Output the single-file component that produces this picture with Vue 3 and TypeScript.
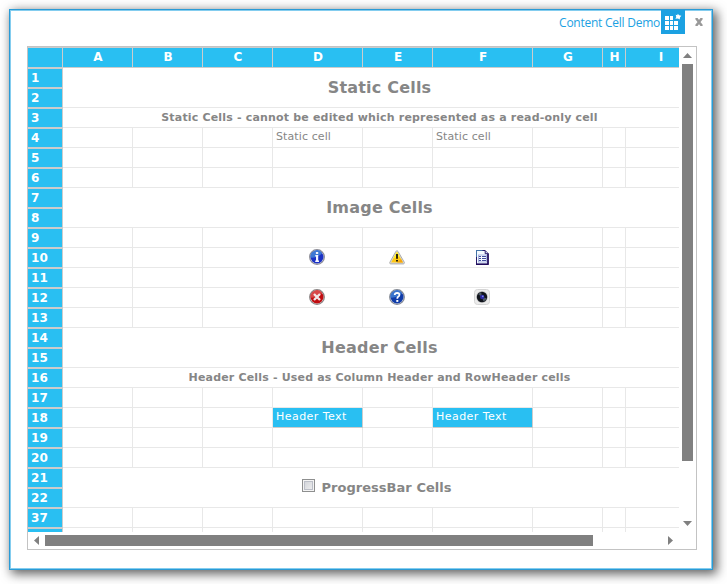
<script setup lang="ts">
interface Column { name: string; width: number }
interface Cell { kind: 'text' | 'head' | 'icon'; value: string }
interface Block {
  rows: number[]
  type: 'cells' | 'title' | 'note' | 'progress'
  text?: string
  cells?: Record<string, Cell>
}

const columns: Column[] = [
  { name: 'A', width: 70 },
  { name: 'B', width: 70 },
  { name: 'C', width: 70 },
  { name: 'D', width: 90 },
  { name: 'E', width: 70 },
  { name: 'F', width: 100 },
  { name: 'G', width: 70 },
  { name: 'H', width: 23 },
  { name: 'I', width: 70 },
]

const text = (value: string): Cell => ({ kind: 'text', value })
const head = (value: string): Cell => ({ kind: 'head', value })
const icon = (value: string): Cell => ({ kind: 'icon', value })
const blank = (row: number): Block => ({ rows: [row], type: 'cells' })

const blocks: Block[] = [
  { rows: [1, 2], type: 'title', text: 'Static Cells' },
  { rows: [3], type: 'note', text: 'Static Cells - cannot be edited which represented as a read-only cell' },
  { rows: [4], type: 'cells', cells: { D: text('Static cell'), F: text('Static cell') } },
  blank(5),
  blank(6),
  { rows: [7, 8], type: 'title', text: 'Image Cells' },
  blank(9),
  { rows: [10], type: 'cells', cells: { D: icon('info'), E: icon('warning'), F: icon('document') } },
  blank(11),
  { rows: [12], type: 'cells', cells: { D: icon('error'), E: icon('help'), F: icon('camera') } },
  blank(13),
  { rows: [14, 15], type: 'title', text: 'Header Cells' },
  { rows: [16], type: 'note', text: 'Header Cells - Used as Column Header and RowHeader cells' },
  blank(17),
  { rows: [18], type: 'cells', cells: { D: head('Header Text'), F: head('Header Text') } },
  blank(19),
  blank(20),
  { rows: [21, 22], type: 'progress', text: 'ProgressBar Cells' },
  blank(37),
]

const rowNumbers = blocks.flatMap((b) => b.rows)
</script>

<template>
  <div class="page">
    <div class="window">
      <header class="titlebar">
        <span class="caption">Content Cell Demo</span>
        <svg class="logo" width="24" height="24" viewBox="0 0 24 24" shape-rendering="crispEdges">
          <rect width="24" height="24" fill="#1ba1e2" />
          <path fill="#fff" d="M4 6h4v4H4zM9 6h3v4H9zM4 11h4v4H4zM9 11h3v4H9zM13 11h4v4h-4zM4 16h4v4H4zM9 16h3v4H9zM13 16h4v4h-4z" />
          <path fill="#fff" shape-rendering="auto" d="M16.7 3.7l1.5 1.6 2.2.5-1.3 1.5-.5 2.1-1.6-.9-2.6.3.9-1.9-.6-2.2 1.7.5z" />
        </svg>
        <svg class="close" width="8" height="8" viewBox="0 0 8 8">
          <path d="M1 0L7 8M7 0L1 8" stroke="#999" stroke-width="2.5" />
        </svg>
      </header>

      <div class="sheet">
        <div class="main">
          <div class="viewport">
            <div class="colheads">
              <div class="corner"></div>
              <div v-for="c in columns" :key="c.name" class="colhead" :style="{ width: c.width + 'px' }">{{ c.name }}</div>
            </div>
            <div class="content">
              <div class="rowheads">
                <div v-for="n in rowNumbers" :key="n" class="rowhead">{{ n }}</div>
                <div class="rowhead partial"></div>
              </div>
              <div class="body">
                <template v-for="b in blocks" :key="b.rows[0]">
                  <div v-if="b.type === 'cells'" class="row">
                    <div
                      v-for="c in columns"
                      :key="c.name"
                      class="cell"
                      :class="b.cells?.[c.name]?.kind"
                      :style="{ width: c.width + 'px' }"
                    >
                      <template v-if="b.cells?.[c.name]?.kind === 'icon'">
                        <svg v-if="b.cells[c.name].value === 'info'" width="16" height="16" viewBox="0 0 16 16">
                          <circle cx="8" cy="8" r="7.3" fill="#eef" stroke="#8c8c96" stroke-width="1.3" />
                          <circle cx="8" cy="8" r="6.5" fill="#1c32c4" />
                          <path d="M1.6 8.6A6.4 6.4 0 0 1 13.2 4Q9 9 1.6 8.6z" fill="#3e78d4" />
                          <path d="M6.9 3h2.3v2H6.9zM6.3 6h2.9v5.5h.8V13H6.2v-1.5h.8v-4h-.7z" fill="#f4f6ff" />
                        </svg>
                        <svg v-else-if="b.cells[c.name].value === 'warning'" width="16" height="16" viewBox="0 0 16 16">
                          <path d="M7.9 1.8Q8.6 1.8 9 2.4L15.3 13.3Q15.6 14.8 14.4 14.9H1.6Q.4 14.7.8 13.4L6.9 2.4Q7.2 1.8 7.9 1.8z" fill="#ddd" stroke="#a4a4a4" stroke-width=".9" />
                          <path d="M8 2.8L14 13.5H2z" fill="#ffc814" />
                          <path d="M8 2.8L10.6 7.4 4.2 9.6z" fill="#fff01c" />
                          <path d="M8 13.5L12 10l2 3.5z" fill="#f6a40c" />
                          <path d="M7 5h2v4.8H7zM7 11h2v1.5H7z" fill="#2a2208" />
                        </svg>
                        <svg v-else-if="b.cells[c.name].value === 'document'" class="doc" width="16" height="16" viewBox="0 0 16 16">
                          <path d="M2.5 1.5h8.7l2.8 3V15H2.5z" fill="#f4faff" stroke="#281868" stroke-width="1" />
                          <path d="M2 1h6.5v1H3v6H2z" fill="#4474a8" />
                          <path d="M13.2 4.5h1.6V16H2v-1.3h11.2z" fill="#200c5c" />
                          <path d="M11.2 1.8v2.9h2.9" fill="#c8d8f0" stroke="#281868" stroke-width="1" />
                          <rect x="4.5" y="6" width="8" height="7" fill="#f4f8ff" stroke="#a8b4e0" />
                          <path d="M5 7h2v1H5zM8 7h4v1H8zM5 9h2v1H5zM8 9h4v1H8zM5 11h2v1H5zM8 11h4v1H8z" fill="#404c9c" />
                        </svg>
                        <svg v-else-if="b.cells[c.name].value === 'error'" width="16" height="16" viewBox="0 0 16 16">
                          <circle cx="8" cy="8" r="7.3" fill="#eee" stroke="#8a8484" stroke-width="1.3" />
                          <circle cx="8" cy="8" r="6.5" fill="#c00c10" />
                          <path d="M1.6 8.6A6.4 6.4 0 0 1 13.2 4Q9 9 1.6 8.6z" fill="#d84848" />
                          <path d="M5 5l6 6M11 5l-6 6" stroke="#f2e8e8" stroke-width="2.3" />
                        </svg>
                        <svg v-else-if="b.cells[c.name].value === 'help'" width="16" height="16" viewBox="0 0 16 16">
                          <circle cx="8" cy="8" r="7.3" fill="#eef" stroke="#848a94" stroke-width="1.3" />
                          <circle cx="8" cy="8" r="6.5" fill="#103ca8" />
                          <path d="M1.6 8.6A6.4 6.4 0 0 1 13.2 4Q9 9 1.6 8.6z" fill="#3a74cc" />
                          <path d="M5.7 6Q5.8 3.9 8.2 3.9 10.5 4 10.4 6 10.3 7.2 8.9 8 8.3 8.5 8.3 9.7" fill="none" stroke="#fff" stroke-width="1.8" />
                          <path d="M7.3 11h2v1.9h-2z" fill="#fff" />
                        </svg>
                        <svg v-else width="16" height="16" viewBox="0 0 16 16">
                          <rect x=".5" y=".5" width="15" height="15" rx="3" fill="#ececec" stroke="#d4d4d4" />
                          <circle cx="8" cy="8" r="5.9" fill="#c4c4c4" />
                          <circle cx="8" cy="8" r="5.2" fill="#10141c" />
                          <path d="M8 8L4.2 5.2A4.8 4.8 0 0 1 7.2 3.3zM8 8l4.6 1.2A4.8 4.8 0 0 1 9.5 12.5z" fill="#4c5864" />
                          <circle cx="8.2" cy="8" r="2.2" fill="#2c28a0" />
                          <circle cx="8.8" cy="7.3" r=".9" fill="#7c8cf0" />
                        </svg>
                      </template>
                      <span v-else-if="b.cells?.[c.name]">{{ b.cells[c.name].value }}</span>
                    </div>
                  </div>
                  <div v-else class="merged" :class="[b.type, { tall: b.rows.length > 1 }]">
                    <span v-if="b.type === 'progress'" class="check"></span>
                    <span>{{ b.text }}</span>
                  </div>
                </template>
                <div class="row partial">
                  <div v-for="c in columns" :key="c.name" class="cell" :style="{ width: c.width + 'px' }"></div>
                </div>
              </div>
            </div>
          </div>
          <div class="vbar">
            <svg width="9" height="5" viewBox="0 0 9 5"><path d="M0 5L4.5 0 9 5z" fill="#808080" /></svg>
            <div class="vtrack"><div class="vthumb"></div></div>
            <svg width="9" height="5" viewBox="0 0 9 5"><path d="M0 0L4.5 5 9 0z" fill="#808080" /></svg>
          </div>
        </div>
        <div class="hbar">
          <svg width="5" height="9" viewBox="0 0 5 9"><path d="M5 0L0 4.5 5 9z" fill="#808080" /></svg>
          <div class="htrack"><div class="hthumb"></div></div>
          <svg width="5" height="9" viewBox="0 0 5 9"><path d="M0 0L5 4.5 0 9z" fill="#808080" /></svg>
        </div>
      </div>
    </div>
  </div>
</template>

<style>
body {
  background: #fff;
  overflow: hidden;
}
</style>

<style scoped>
.page {
  box-sizing: border-box;
  width: 727px;
  height: 584px;
  padding: 9px;
  overflow: hidden;
  font-family: 'DejaVu Sans', sans-serif;
}
.window {
  box-sizing: border-box;
  width: 704px;
  height: 561px;
  border: 1px solid #2a9bd6;
  background: #fff;
  box-shadow: inset 0 0 0 1px #84cdef, 3px 3px 10px 1px rgba(0, 0, 0, 0.62);
}
.titlebar {
  display: flex;
  height: 36px;
  justify-content: flex-end;
  padding-right: 9px;
}
.caption {
  margin-top: 4px;
  color: #1ba1e2;
  font: 12px/17px 'Open Sans', sans-serif;
  letter-spacing: -0.25px;
  white-space: nowrap;
}
.logo {
  margin-left: 1px;
}
.close {
  margin: 8px 0 0 10px;
}
.sheet {
  box-sizing: border-box;
  width: 670px;
  height: 504px;
  margin-left: 17px;
  border: 1px solid #c3c3c3;
}
.main {
  display: flex;
  height: 485px;
}
.viewport {
  width: 651px;
  height: 485px;
  overflow: hidden;
}
.colheads {
  display: flex;
  width: 668px;
  height: 21px;
}
.corner,
.colhead {
  box-sizing: border-box;
  flex: none;
  border: solid #ccc;
  border-width: 1px 1px 1px 0;
  background: #29bff2;
}
.corner {
  width: 35px;
}
.colhead {
  padding-left: 1px;
  color: #fff;
  font-size: 12px;
  font-weight: bold;
  line-height: 19px;
  text-align: center;
}
.content {
  display: flex;
  width: 668px;
}
.rowheads {
  width: 35px;
  flex: none;
}
.rowhead {
  box-sizing: border-box;
  height: 20px;
  padding-left: 3px;
  border: solid #ccc;
  border-width: 1px 1px 1px 0;
  background: #29bff2;
  color: #fff;
  font-size: 12px;
  font-weight: bold;
  letter-spacing: 0.2px;
  line-height: 18px;
}
.body {
  width: 633px;
  flex: none;
}
.row {
  display: flex;
  height: 20px;
}
.cell {
  box-sizing: border-box;
  flex: none;
  height: 20px;
  border: solid #e8e8e8;
  border-width: 0 1px 1px 0;
  color: #868686;
  font-size: 11px;
  line-height: 13px;
  white-space: nowrap;
}
.cell.text,
.cell.head {
  padding: 2px 0 0 3px;
}
.cell.text {
  letter-spacing: 0.1px;
}
.cell.head {
  border-color: #ccc;
  background: #29bff2;
  color: #fff;
  letter-spacing: 0.45px;
}
.cell.icon {
  display: flex;
  justify-content: center;
  padding: 1px 1px 0 0;
}
.doc {
  margin-right: 1px;
}
.partial {
  height: 4px;
  border-bottom: 0;
  overflow: hidden;
}
.merged {
  box-sizing: border-box;
  display: flex;
  height: 20px;
  align-items: center;
  justify-content: center;
  border-bottom: 1px solid #e8e8e8;
  color: #868686;
  font-weight: bold;
  white-space: nowrap;
}
.tall {
  height: 40px;
}
.title {
  padding-bottom: 1px;
  font-size: 16px;
  letter-spacing: 0.2px;
}
.note {
  font-size: 11px;
  letter-spacing: 0.18px;
}
.progress {
  gap: 6px;
  padding-right: 5px;
  font-size: 13px;
  letter-spacing: 0.04px;
}
.check {
  box-sizing: border-box;
  width: 13px;
  height: 13px;
  margin-bottom: 4px;
  border: 1px solid #8e8f8f;
  background: linear-gradient(135deg, #cdd0d6, #f2f2f2);
  box-shadow: inset 0 0 0 1px #f4f4f4, inset 0 0 0 2px #bcbfc8;
}
.vbar {
  box-sizing: border-box;
  display: flex;
  width: 17px;
  flex-direction: column;
  align-items: center;
  padding: 6px 0;
}
.vtrack {
  flex: 1;
  padding-top: 6px;
}
.vthumb {
  width: 11px;
  height: 397px;
  background: #808080;
}
.hbar {
  display: flex;
  height: 17px;
  align-items: center;
  padding: 0 23px 0 6px;
}
.htrack {
  flex: 1;
  padding-left: 6px;
}
.hthumb {
  width: 548px;
  height: 11px;
  background: #808080;
}
</style>
